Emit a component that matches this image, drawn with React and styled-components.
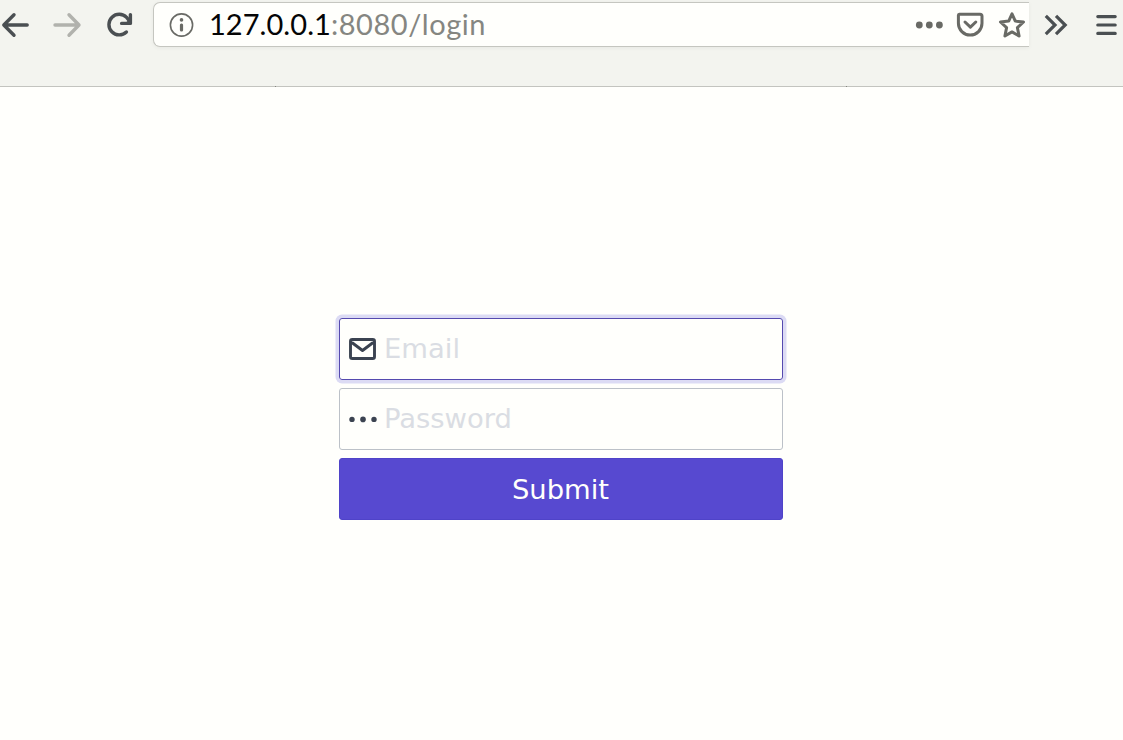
import React from 'react';
import styled, { createGlobalStyle } from 'styled-components';

const GlobalStyle = createGlobalStyle`
  * { box-sizing: border-box; }
  body { margin: 0; background: #fffffc; overflow: hidden; font-family: "DejaVu Sans", sans-serif; }
`;

const Window = styled.div`
  height: 740px;
  display: flex;
  flex-direction: column;
`;

const Toolbar = styled.header`
  flex: none;
  position: relative;
  height: 87px;
  padding-top: 2px;
  display: flex;
  align-items: flex-start;
  background: #f3f4ef;
  border-bottom: 1px solid #c3c4bf;
`;

const EdgeMark = styled.span`
  position: absolute;
  bottom: -1px;
  left: ${(p) => p.$left}px;
  width: 1px;
  height: 1px;
  background: #85867f;
`;

const ToolButton = styled.button`
  flex: none;
  width: ${(p) => p.$width}px;
  height: 45px;
  padding: 0;
  margin-left: ${(p) => p.$gap || 0}px;
  border: 0;
  background: none;
  display: flex;
  align-items: center;
  color: ${(p) => p.$color || '#4a4f52'};
`;

const Icon = styled.svg`
  display: block;
  flex: none;
  fill: none;
  stroke: currentColor;
  stroke-width: ${(p) => p.$weight || 3.4};
  stroke-linecap: ${(p) => (p.$sharp ? 'butt' : 'round')};
  stroke-linejoin: ${(p) => (p.$sharp ? 'miter' : 'round')};
`;

const AddressBar = styled.div`
  flex: none;
  width: 876px;
  height: 45px;
  margin-left: 19px;
  padding-left: 14px;
  display: flex;
  align-items: center;
  background: #fffffc;
  border: 1px solid #c5c6c0;
  border-right: 0;
  border-radius: 7px 0 0 7px;
  box-shadow: 0 1px 4px rgba(0, 0, 0, 0.05);
  color: #696a65;
`;

const Address = styled.div`
  flex: 1;
  margin-left: 15px;
  font: 29px/41px Lato, sans-serif;
  padding-bottom: 2px;
  white-space: nowrap;
  color: #858681;
`;

const Host = styled.span`
  color: #050505;
  letter-spacing: 0.05px;
`;

const Path = styled.span`
  letter-spacing: 0.55px;
`;

const Page = styled.main`
  flex: 1;
  display: flex;
  justify-content: center;
  padding: 231px 1px 0 0;
`;

const LoginForm = styled.form`
  width: 444px;
  display: flex;
  flex-direction: column;
  gap: 8px;
`;

const Field = styled.label`
  height: 62px;
  padding-left: 9px;
  display: flex;
  align-items: center;
  border: 1px solid ${(p) => (p.$active ? '#554aaf' : '#bcc1c8')};
  border-radius: 3px;
  box-shadow: ${(p) => (p.$active ? '0 0 0 3.5px #dcdbf4' : 'none')};
  color: #3b4351;
`;

const Input = styled.input`
  flex: 1;
  min-width: 0;
  height: 58px;
  margin-left: 7px;
  padding: 0 0 2px;
  border: 0;
  outline: 0;
  background: none;
  font: 27.4px "DejaVu Sans", sans-serif;
  &::placeholder { color: #dadde3; opacity: 1; }
`;

const Submit = styled.button`
  height: 62px;
  padding: 0 1px 0 0;
  border: 1px solid #4f43c8;
  border-radius: 3px;
  background: #5749d0;
  color: #fffffc;
  font: 27.4px "DejaVu Sans", sans-serif;
`;

export default function App() {
  return (
    <Window>
      <GlobalStyle />
      <Toolbar>
        <ToolButton type="button" aria-label="Back" $width={30}>
          <Icon width="30" height="26" viewBox="0 0 30 26">
            <path d="M27.2 13H4M14 2.8L3.8 13L14 23.2" />
          </Icon>
        </ToolButton>
        <ToolButton type="button" aria-label="Forward" $width={30} $gap={22} $color="#b1b2ad">
          <Icon width="30" height="26" viewBox="0 0 30 26">
            <path d="M3 13h24M17 2.8L27 13L17 23.2" />
          </Icon>
        </ToolButton>
        <ToolButton type="button" aria-label="Reload" $width={30} $gap={22}>
          <Icon width="30" height="26" viewBox="0 0 30 26">
            <path d="M22.4 20A10.3 10.3 0 1 1 22.6 5.4L25.5 9" />
            <path d="M26.4 2.6v8.8H17.6" />
            <path d="M26.5 6v6h-6z" fill="currentColor" stroke="none" />
          </Icon>
        </ToolButton>
        <AddressBar>
          <Icon width="26" height="26" viewBox="0 0 26 26" $weight={1.6}>
            <circle cx="13.5" cy="13" r="11.1" />
            <circle cx="13.5" cy="7.9" r="1.8" fill="currentColor" stroke="none" />
            <rect x="11.9" y="11.4" width="3.2" height="8.2" rx="1.5" fill="currentColor" stroke="none" />
          </Icon>
          <Address>
            <Host>127.0.0.1</Host>
            <Path>:8080/login</Path>
          </Address>
          <Icon width="114" height="32" viewBox="0 0 114 32" $weight={3}>
            <g fill="currentColor" stroke="none">
              <circle cx="4.3" cy="16" r="3.4" />
              <circle cx="14.3" cy="16" r="3.4" />
              <circle cx="24.4" cy="16" r="3.4" />
            </g>
            <path d="M44.2 5.3H65q2 0 2 2v7a11.8 11.8 0 0 1-23.6 0V6.3q0-1 .8-1zM50 13l5.4 5.2l5.4-5.2" />
            <path d="M97 4.9l3.3 7.2 8.2.9-6.1 5.6 1.7 8.4-7.1-4.1-7.1 4.1 1.7-8.4-6.1-5.6 8.2-.9z" />
          </Icon>
        </AddressBar>
        <ToolButton type="button" aria-label="More tools" $width={26} $gap={14}>
          <Icon width="26" height="26" viewBox="0 0 26 26" $weight={3.2} $sharp>
            <path d="M2.8 3.8l9.2 9.2-9.2 9.2M13 3.8l9.2 9.2-9.2 9.2" />
          </Icon>
        </ToolButton>
        <ToolButton type="button" aria-label="Menu" $width={24} $gap={26}>
          <Icon width="24" height="26" viewBox="0 0 24 26" $weight={3.2}>
            <path d="M2.8 4.6h17.4M2.8 13h17.4M2.8 21.4h17.4" />
          </Icon>
        </ToolButton>
        <EdgeMark $left={275} />
        <EdgeMark $left={846} />
      </Toolbar>
      <Page>
        <LoginForm onSubmit={(e) => e.preventDefault()}>
          <Field $active>
            <Icon width="28" height="24" viewBox="0 0 28 24" $weight={2.9}>
              <rect x="1.5" y="2.5" width="24" height="19" rx="1.8" />
              <path d="M3.5 6l10 7.5L23.5 6" />
            </Icon>
            <Input type="email" placeholder="Email" aria-label="Email" />
          </Field>
          <Field>
            <Icon width="28" height="24" viewBox="0 0 28 24">
              <g fill="currentColor" stroke="none">
                <circle cx="3" cy="12.4" r="2.7" />
                <circle cx="14" cy="12.4" r="2.8" />
                <circle cx="25" cy="12.4" r="2.7" />
              </g>
            </Icon>
            <Input type="password" placeholder="Password" aria-label="Password" />
          </Field>
          <Submit type="submit">Submit</Submit>
        </LoginForm>
      </Page>
    </Window>
  );
}
